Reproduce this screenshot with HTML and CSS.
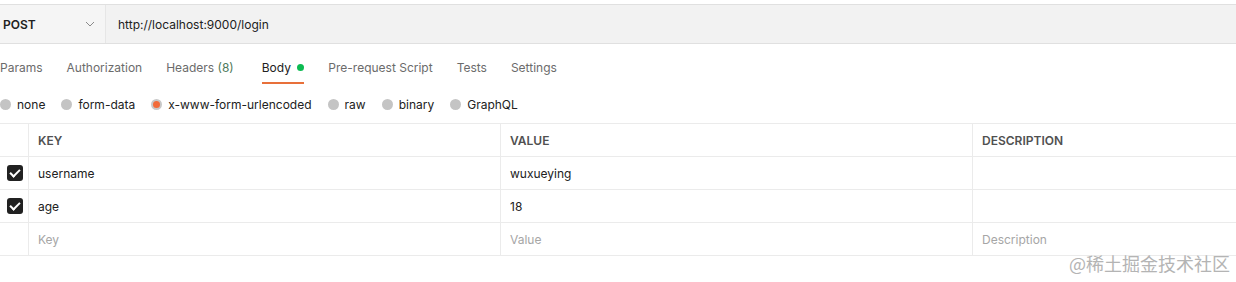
FILE: index.html
```html
<!DOCTYPE html>
<html lang="zh">
  <head>
    <meta charset="utf-8" />
    <meta name="viewport" content="width=device-width, initial-scale=1.0" />
    <title>POST login</title>
    <link rel="stylesheet" href="styles.css">
  </head>

  <body>
    <header class="url-bar">
      <div class="method">
        <span>POST</span>
        <svg class="chevron" width="10" height="6" viewBox="0 0 10 6"><path d="M1 1l4 4 4-4" fill="none" stroke="#8a8a8a" stroke-width="1"/></svg>
      </div>
      <div class="url">http://localhost:9000/login</div>
    </header>

    <nav class="tabs">
      <span class="tab">Params</span>
      <span class="tab">Authorization</span>
      <span class="tab headers">Headers <em>(8)</em></span>
      <span class="tab valgt">Body <i class="dot"></i></span>
      <span class="tab">Pre-request Script</span>
      <span class="tab">Tests</span>
      <span class="tab">Settings</span>
    </nav>

    <div class="body-types">
      <label><i class="radio"></i>none</label>
      <label><i class="radio"></i>form-data</label>
      <label><i class="radio on"></i>x-www-form-urlencoded</label>
      <label><i class="radio"></i>raw</label>
      <label><i class="radio"></i>binary</label>
      <label><i class="radio"></i>GraphQL</label>
    </div>

    <section class="tabel">
      <div class="row head">
        <div class="cell check"></div>
        <div class="cell">KEY</div>
        <div class="cell">VALUE</div>
        <div class="cell">DESCRIPTION</div>
      </div>
      <div class="row">
        <div class="cell check"><i class="box"></i></div>
        <div class="cell">username</div>
        <div class="cell">wuxueying</div>
        <div class="cell"></div>
      </div>
      <div class="row">
        <div class="cell check"><i class="box"></i></div>
        <div class="cell">age</div>
        <div class="cell">18</div>
        <div class="cell"></div>
      </div>
      <div class="row tom">
        <div class="cell check"></div>
        <div class="cell">Key</div>
        <div class="cell">Value</div>
        <div class="cell">Description</div>
      </div>
    </section>

    <div class="watermark">@稀土掘金技术社区</div>
  </body>
</html>
```

FILE: styles.css
```css
body {
  margin: 0;
  font-family: Inter, "Noto Sans CJK SC", sans-serif;
  color: #212121;
  background: #fff;
  width: 1236px;
  height: 282px;
  overflow: hidden;
  position: relative;
}

.url-bar {
  display: flex;
  margin-top: 4px;
  height: 38px;
  border-top: 1px solid #e0e0e0;
  border-bottom: 1px solid #e0e0e0;
  background: #f2f2f2;
}

.method {
  width: 106px;
  display: flex;
  align-items: center;
  justify-content: space-between;
  padding: 0 10px 0 3px;
  box-sizing: border-box;
  border-right: 1px solid #e6e6e6;
  background: #f5f5f5;
  font-weight: 600;
  font-size: 12px;
}

.url {
  display: flex;
  align-items: center;
  padding-left: 12px;
  font-size: 12px;
}

.tabs {
  display: flex;
  gap: 24px;
  height: 40px;
  align-items: center;
  margin-top: 4px;
}

.tab {
  position: relative;
  font-size: 12px;
  color: #6b6b6b;
  line-height: 40px;
}

.tab.headers {
  margin-right: 4px;
}

.tab em {
  font-style: normal;
  color: #4f7a5c;
}

.tab.valgt {
  color: #212121;
}

.tab.valgt::after {
  content: "";
  position: absolute;
  left: 0;
  right: 0;
  bottom: 4px;
  height: 2px;
  background: #e8703a;
}

.dot {
  display: inline-block;
  width: 7px;
  height: 7px;
  border-radius: 50%;
  background: #0cbb52;
  margin-left: 3px;
  vertical-align: 1px;
}

.body-types {
  display: flex;
  gap: 16px;
  height: 32px;
  align-items: center;
  font-size: 12px;
  color: #212121;
}

.body-types label {
  display: flex;
  align-items: center;
  gap: 6px;
}

.radio {
  display: inline-block;
  width: 11px;
  height: 11px;
  border-radius: 50%;
  background: #c4c4c4;
  box-sizing: border-box;
}

.radio.on {
  background: #f26b3a;
  border: 2px solid #c8c8c8;
}

.tabel {
  margin-top: 3px;
  border-top: 1px solid #ebebeb;
}

.row {
  display: grid;
  grid-template-columns: 28px 472px 472px 1fr;
  height: 33px;
  border-bottom: 1px solid #ebebeb;
  box-sizing: border-box;
  font-size: 12px;
}

.cell {
  display: flex;
  align-items: center;
  padding-left: 9px;
  border-left: 1px solid #ebebeb;
}

.cell.check {
  border-left: none;
  padding-left: 7px;
}

.head .cell {
  font-weight: 600;
  color: #505050;
}

.tom .cell {
  color: #a6a6a6;
}

.box {
  display: inline-block;
  width: 16px;
  height: 16px;
  border-radius: 3px;
  background: #212121;
  position: relative;
}

.box::after {
  content: "";
  position: absolute;
  left: 5px;
  top: 2px;
  width: 4px;
  height: 8px;
  border: solid #fff;
  border-width: 0 2px 2px 0;
  transform: rotate(45deg);
}

.watermark {
  position: absolute;
  right: 6px;
  bottom: 6px;
  font-family: "Noto Sans CJK SC", sans-serif;
  font-size: 18px;
  color: #b4b4b4;
}
```
